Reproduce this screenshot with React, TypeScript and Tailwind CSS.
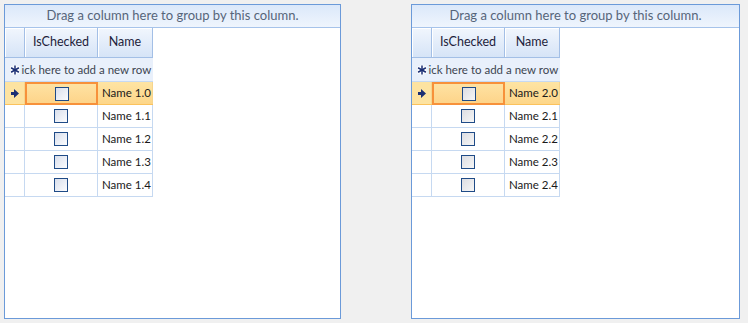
import React from 'react';

type GridProps = {
  group: number;
  grey?: boolean;
  className?: string;
};

const rows = [0, 1, 2, 3, 4];

function Arrow() {
  return (
    <svg width="8" height="9" viewBox="0 0 8 9">
      <polygon points="0,3 3,3 3,0 8,4.5 3,9 3,6 0,6" fill="#1b2f74" />
    </svg>
  );
}

function Star() {
  return (
    <svg width="10" height="10" viewBox="0 0 10 10">
      <g stroke="#ffffff" strokeWidth="3.2" strokeLinecap="round">
        <line x1="5" y1="1" x2="5" y2="9" />
        <line x1="1.5" y1="3" x2="8.5" y2="7" />
        <line x1="1.5" y1="7" x2="8.5" y2="3" />
      </g>
      <g stroke="#1b2f74" strokeWidth="1.5" strokeLinecap="round">
        <line x1="5" y1="1" x2="5" y2="9" />
        <line x1="1.5" y1="3" x2="8.5" y2="7" />
        <line x1="1.5" y1="7" x2="8.5" y2="3" />
      </g>
    </svg>
  );
}

function CheckBox({ grey }: { grey?: boolean }) {
  return (
    <div
      className={`w-[14px] h-[14px] border border-[#1f4b87] ${
        grey ? 'bg-gradient-to-br from-[#dcdde2] to-[#f6f6f6]' : 'bg-gradient-to-br from-[#d9dfec] to-[#fbfcfe]'
      }`}
    />
  );
}

/** Grid panel: group-by strip, header, new row line, data rows */
function GridPanel({ group, grey, className = '' }: GridProps) {
  return (
    <div className={`flex flex-col h-[315px] border border-[#6b9ad9] bg-white ${className}`}>
      <div className="h-[23px] shrink-0 flex items-center justify-center border-b border-[#a6c3ea] bg-gradient-to-b from-[#dbe8fa] to-[#eff5fd] text-[13px] text-[#56657a] whitespace-nowrap">
        Drag a column here to group by this column.
      </div>

      <div className="w-[148px] text-[12px] whitespace-nowrap">
        {/* header */}
        <div className="flex h-[30px] border-b border-[#a3bfe6] text-[12.5px]">
          <div className="w-[20px] border-r border-[#a3bfe6] bg-gradient-to-b from-[#f1f6fd] to-[#d6e4f7] shadow-[inset_1px_1px_0_#ffffff]" />
          <div className="w-[73px] flex items-center justify-center border-r border-[#a3bfe6] bg-gradient-to-b from-[#f1f6fd] to-[#d6e4f7] shadow-[inset_1px_1px_0_#ffffff] text-[#1e1e3c]">
            IsChecked
          </div>
          <div className="w-[55px] flex items-center justify-center border-r border-[#a3bfe6] bg-gradient-to-b from-[#f1f6fd] to-[#d6e4f7] shadow-[inset_1px_1px_0_#ffffff] text-[#1e1e3c]">
            Name
          </div>
        </div>

        {/* new row line */}
        <div className="relative flex items-center h-[24px] border-b border-[#c6d9f1] bg-[#e9f0fb] overflow-hidden">
          <span className="pl-[6px] text-[11.5px] text-[#3c4450]">Click here to add a new row</span>
          <div className="absolute left-0 top-0 bottom-0 w-[16px] flex items-center justify-center pl-[3px] bg-[#e9f0fb]">
            <Star />
          </div>
        </div>

        {/* data rows */}
        {rows.map((i) => {
          const selected = i === 0;
          return (
            <div
              key={i}
              className={`flex h-[23px] border-b ${
                selected ? 'border-[#fbc25c] bg-gradient-to-b from-[#fee4a3] to-[#fdd689]' : 'border-[#c6d9f1]'
              }`}
            >
              <div
                className={`w-[20px] flex items-center justify-center border-r ${
                  selected ? 'border-[#f6d58e] bg-[#fde3a1]' : 'border-[#c6d9f1]'
                }`}
              >
                {selected ? <Arrow /> : null}
              </div>
              <div
                className={`w-[73px] flex items-center justify-center ${
                  selected
                    ? 'border-2 border-[#f7913a] -mb-px bg-gradient-to-b from-[#fee2a2] to-[#fdd48a]'
                    : 'border-r border-[#c6d9f1]'
                }`}
              >
                <CheckBox grey={grey} />
              </div>
              <div
                className={`w-[55px] flex items-center pl-[4px] border-r text-[11.5px] text-[#1a1a1a] ${
                  selected ? 'border-[#f6d58e]' : 'border-[#c6d9f1]'
                }`}
              >
                Name {group}.{i}
              </div>
            </div>
          );
        })}
      </div>
    </div>
  );
}

export default function App() {
  return (
    <div className="w-[748px] h-[323px] bg-[#f0f0f0] flex items-start pt-[4px] pl-[4px] font-['Segoe_UI','Lato',sans-serif]">
      <GridPanel group={1} className="w-[337px]" />
      <GridPanel group={2} grey className="w-[329px] ml-[70px]" />
    </div>
  );
}
